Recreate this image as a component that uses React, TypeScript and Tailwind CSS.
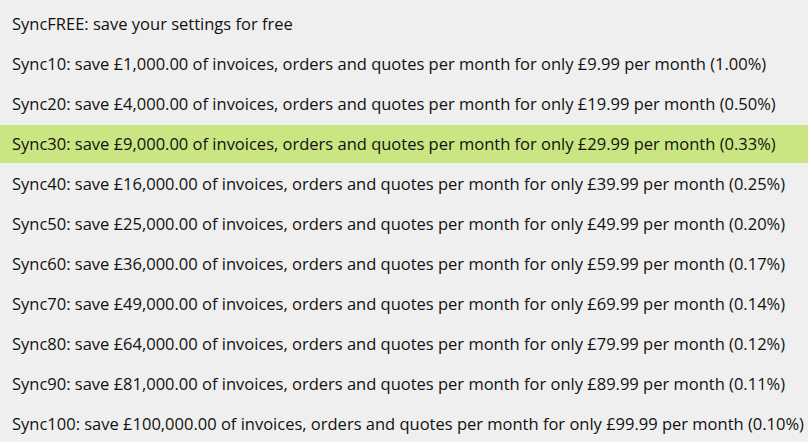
const plans = [
  'SyncFREE: save your settings for free',
  'Sync10: save £1,000.00 of invoices, orders and quotes per month for only £9.99 per month (1.00%)',
  'Sync20: save £4,000.00 of invoices, orders and quotes per month for only £19.99 per month (0.50%)',
  'Sync30: save £9,000.00 of invoices, orders and quotes per month for only £29.99 per month (0.33%)',
  'Sync40: save £16,000.00 of invoices, orders and quotes per month for only £39.99 per month (0.25%)',
  'Sync50: save £25,000.00 of invoices, orders and quotes per month for only £49.99 per month (0.20%)',
  'Sync60: save £36,000.00 of invoices, orders and quotes per month for only £59.99 per month (0.17%)',
  'Sync70: save £49,000.00 of invoices, orders and quotes per month for only £69.99 per month (0.14%)',
  'Sync80: save £64,000.00 of invoices, orders and quotes per month for only £79.99 per month (0.12%)',
  'Sync90: save £81,000.00 of invoices, orders and quotes per month for only £89.99 per month (0.11%)',
  'Sync100: save £100,000.00 of invoices, orders and quotes per month for only £99.99 per month (0.10%)',
];

export default function App() {
  const selected = 3;
  return (
    <div className="w-[808px] h-[442px] overflow-hidden bg-[#efefef] pt-[5px] font-['Open_Sans',sans-serif] text-[16.5px] text-[#111]">
      <ul className="flex flex-col gap-[2px]">
        {plans.map((p, i) => (
          <li
            key={p}
            className={
              'h-[38px] flex items-center pl-3 whitespace-nowrap ' +
              (i === selected ? 'bg-[#c9e682]' : '')
            }
          >
            {p}
          </li>
        ))}
      </ul>
    </div>
  );
}
